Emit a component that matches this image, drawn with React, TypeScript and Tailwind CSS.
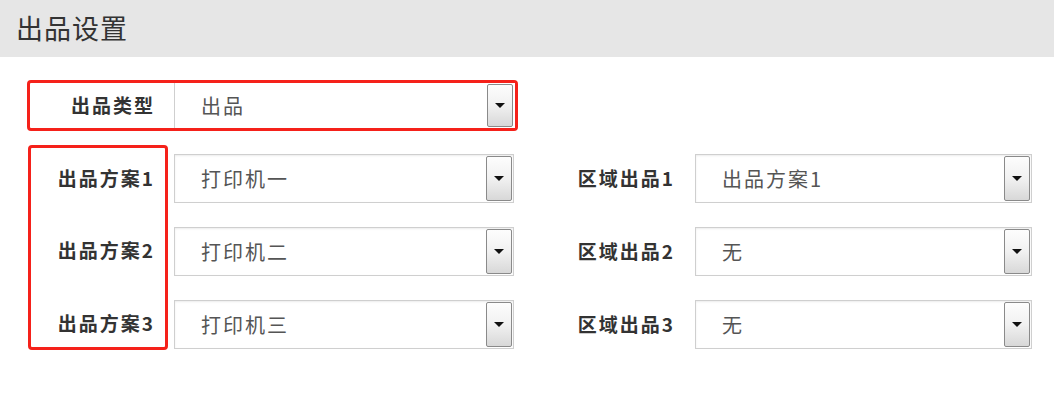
import React from "react";

const FONT = { fontFamily: '"Noto Sans CJK SC", "Noto Sans", sans-serif' };

function DropBtn() {
  return (
    <div className="my-[1px] mr-[1px] flex w-[26px] shrink-0 items-center justify-center rounded-[2px] border border-[#8a8a8a] bg-gradient-to-b from-[#fdfdfd] via-[#f1f1f1] to-[#d8d8d8]">
      <div className="h-0 w-0 border-x-[5px] border-t-[5px] border-x-transparent border-t-[#111]" />
    </div>
  );
}

function Select({ value, className = "" }: { value: string; className?: string }) {
  return (
    <div className={`flex bg-white ${className}`}>
      <div className="flex flex-1 items-center pl-[26px] text-[20px] tracking-[2px] text-[#555]">
        {value}
      </div>
      <DropBtn />
    </div>
  );
}

const left = [
  { label: "出品方案1", value: "打印机一" },
  { label: "出品方案2", value: "打印机二" },
  { label: "出品方案3", value: "打印机三" },
];
const right = [
  { label: "区域出品1", value: "出品方案1" },
  { label: "区域出品2", value: "无" },
  { label: "区域出品3", value: "无" },
];

export default function App() {
  return (
    <div className="h-[403px] w-[1054px] overflow-hidden bg-white" style={FONT}>
      <div className="flex h-[57px] items-center bg-[#e6e6e6] pl-4 text-[27px] tracking-[1px] text-[#333]">
        出品设置
      </div>
      <div className="pl-[27px] pt-[23px]">
        {/* Row 1 */}
        <div className="flex h-[51px] w-[491px] rounded-[4px] border-[3px] border-[#f5211a]">
          <div className="flex w-[144px] items-center justify-end pr-[19px] text-[19px] font-bold tracking-[2px] text-[#333]">
            出品类型
          </div>
          <Select value="出品" className="flex-1 border-l border-[#cfcfcf] pr-[1px]" />
        </div>

        {/* Rows 2-4 */}
        <div className="mt-[14px] flex">
          <div className="ml-[1px] flex h-[205px] w-[140px] flex-col gap-[24px] rounded-[4px] border-[3px] border-[#f5211a] pr-[10px] pt-[6px]">
            {left.map((r) => (
              <div
                key={r.label}
                className="flex h-[49px] items-center justify-end text-[19px] font-bold tracking-[2px] text-[#333]"
              >
                {r.label}
              </div>
            ))}
          </div>
          <div className="ml-[6px] flex w-[340px] flex-col gap-[24px] pt-[9px]">
            {left.map((r) => (
              <Select
                key={r.label}
                value={r.value}
                className="h-[49px] border border-[#cfcfcf] shadow-[inset_0_1px_2px_rgba(0,0,0,0.08)]"
              />
            ))}
          </div>
          <div className="flex flex-col gap-[24px] pt-[9px]">
            {right.map((r) => (
              <div key={r.label} className="flex h-[49px]">
                <div className="flex w-[181px] items-center justify-end pr-[20px] text-[19px] font-bold tracking-[2px] text-[#333]">
                  {r.label}
                </div>
                <Select
                  value={r.value}
                  className="w-[337px] border border-[#cfcfcf] shadow-[inset_0_1px_2px_rgba(0,0,0,0.08)]"
                />
              </div>
            ))}
          </div>
        </div>
      </div>
    </div>
  );
}
